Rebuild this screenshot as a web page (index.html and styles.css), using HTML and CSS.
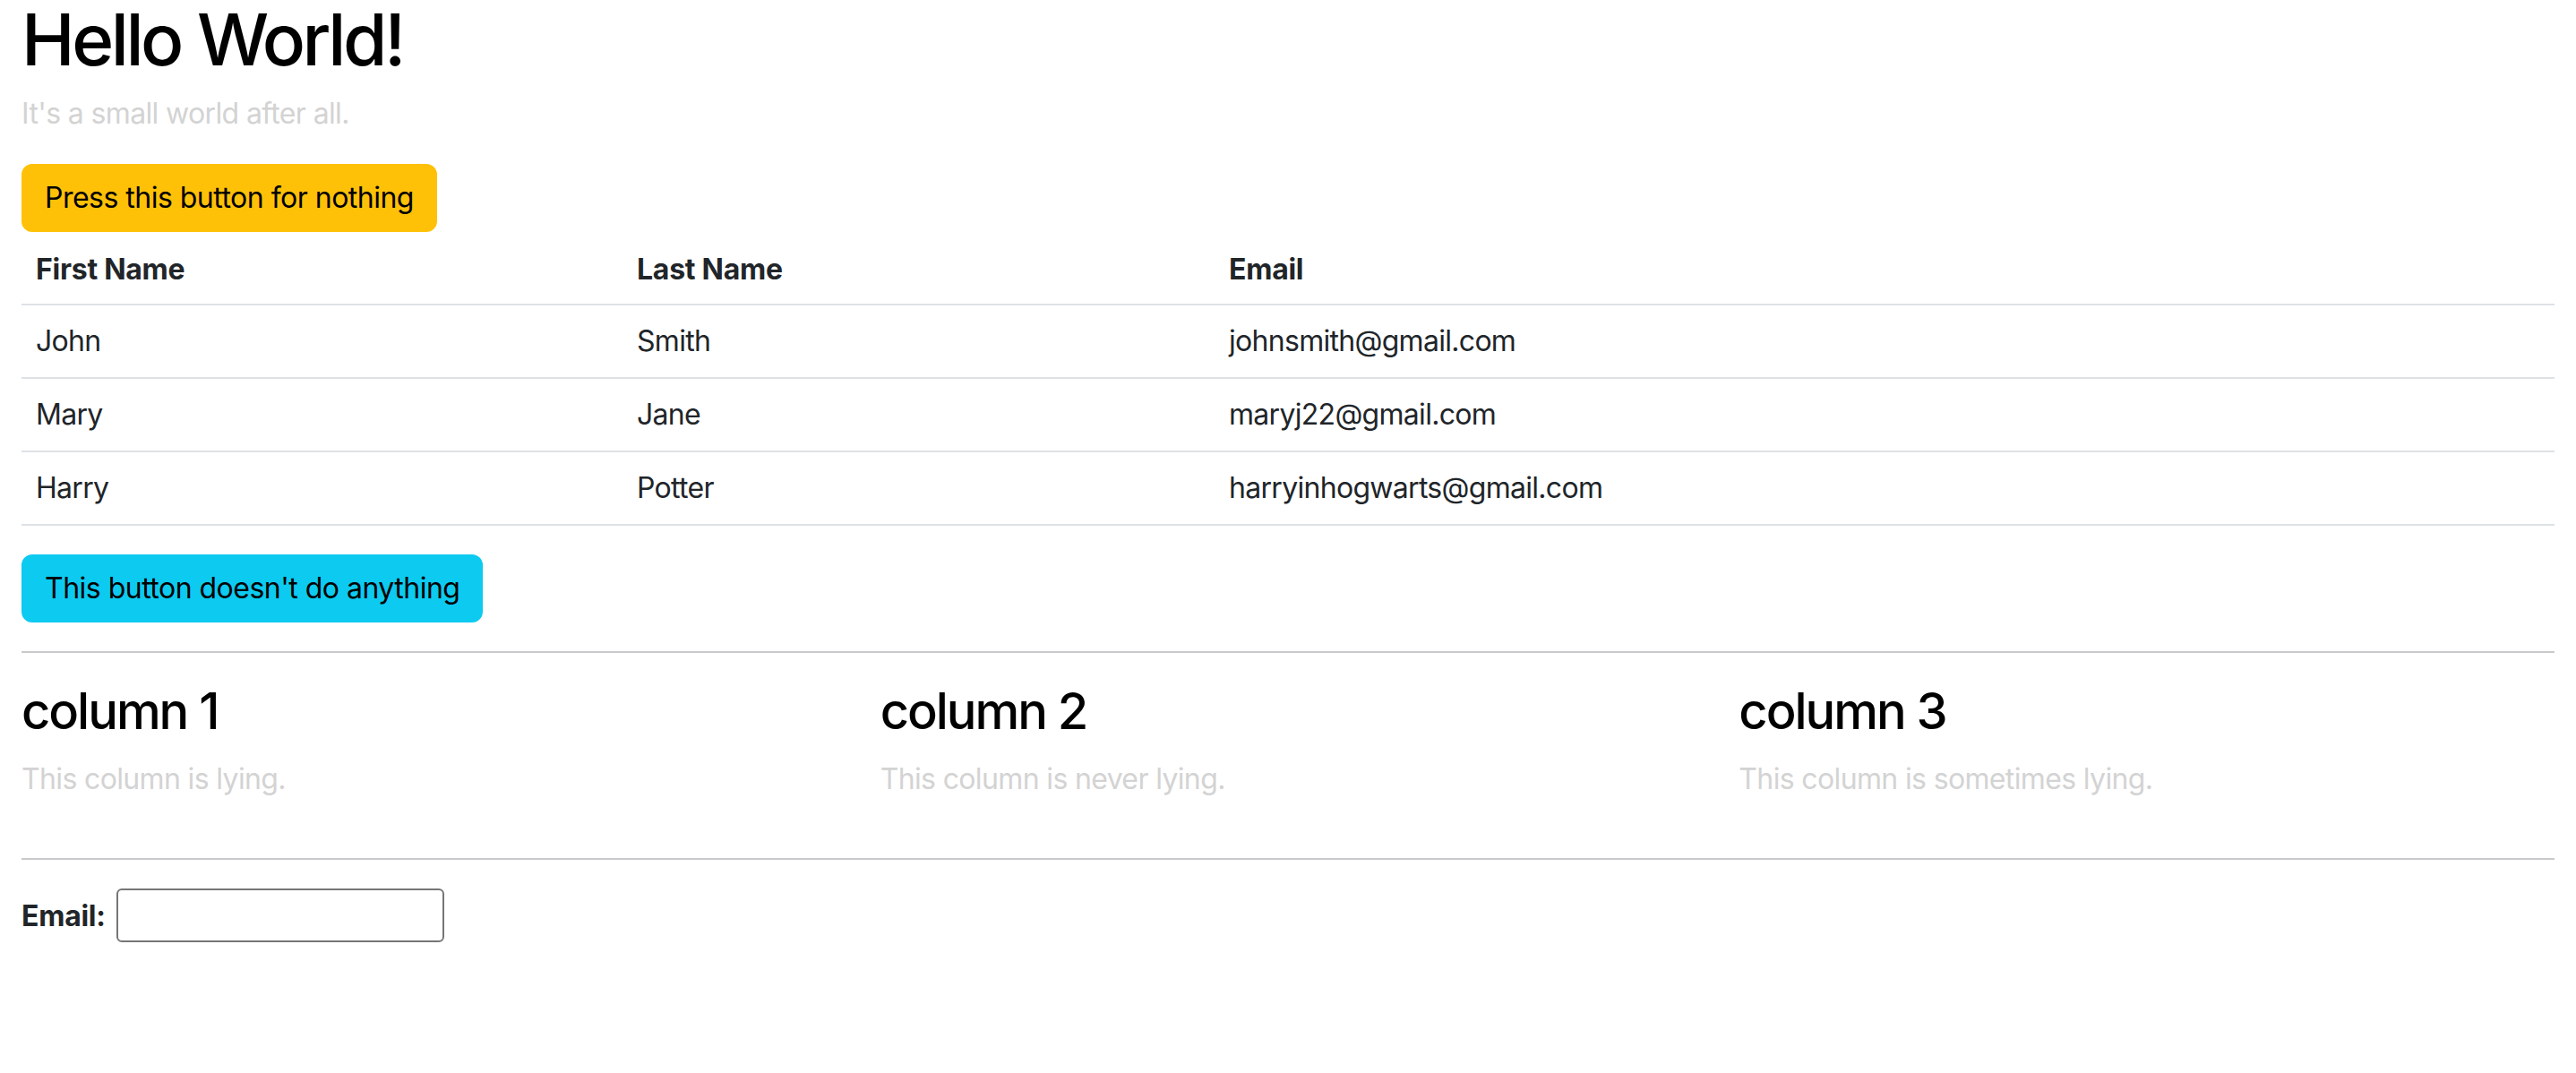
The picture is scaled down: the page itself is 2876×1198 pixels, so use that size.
FILE: index.html
```html
<!DOCTYPE html>
<html lang="en">
<head>
<meta charset="utf-8">
<title>Hello World</title>
<link rel="stylesheet" href="styles.css">
</head>
<body>
<div class="container">
  <h1 class="title">Hello World!</h1>
  <p class="muted lead-gap">It's a small world after all.</p>
  <div class="btn-wrap">
    <button class="btn btn-warning" type="button">Press this button for nothing</button>
  </div>
  <table class="table">
    <thead>
      <tr>
        <th class="c1">First Name</th>
        <th class="c2">Last Name</th>
        <th>Email</th>
      </tr>
    </thead>
    <tbody>
      <tr><td>John</td><td>Smith</td><td>johnsmith@gmail.com</td></tr>
      <tr><td>Mary</td><td>Jane</td><td>maryj22@gmail.com</td></tr>
      <tr><td>Harry</td><td>Potter</td><td>harryinhogwarts@gmail.com</td></tr>
    </tbody>
  </table>
  <div class="btn-wrap">
    <button class="btn btn-info" type="button">This button doesn't do anything</button>
  </div>
  <hr class="rule">
  <div class="cols">
    <div class="col">
      <h3 class="col-title">column 1</h3>
      <p class="muted">This column is lying.</p>
    </div>
    <div class="col">
      <h3 class="col-title">column 2</h3>
      <p class="muted">This column is never lying.</p>
    </div>
    <div class="col">
      <h3 class="col-title">column 3</h3>
      <p class="muted">This column is sometimes lying.</p>
    </div>
  </div>
  <hr class="rule">
  <form class="email-form">
    <label class="email-label" for="email">Email:</label>
    <input class="email-input" type="email" id="email">
  </form>
</div>
</body>
</html>
```

FILE: styles.css
```css
html, body {
  margin: 0;
  padding: 0;
  background: #ffffff;
}

body {
  font-family: Inter, "Liberation Sans", sans-serif;
  font-size: 32px;
  line-height: 1.5;
  letter-spacing: -0.02em;
  color: #212529;
}

.container {
  padding: 0 24px;
}

.title {
  margin: 0 0 16px 0;
  font-size: 80px;
  font-weight: 500;
  line-height: 87px;
  letter-spacing: -0.043em;
  color: #000000;
}

.muted {
  margin: 0 0 32px 0;
  color: #d3d3d3;
}

.btn-wrap {
  display: flex;
}

.btn {
  font-family: inherit;
  font-size: 32px;
  line-height: 48px;
  letter-spacing: -0.016em;
  padding: 12px 24px;
  border: 2px solid transparent;
  border-radius: 12px;
  color: #000000;
  cursor: pointer;
}

.btn-warning {
  background: #ffc107;
  border-color: #ffc107;
}

.btn-info {
  background: #0dcaf0;
  border-color: #0dcaf0;
}

.table {
  width: 100%;
  border-collapse: collapse;
  margin: 0 0 32px 0;
  color: #212529;
}

.table th,
.table td {
  padding: 16px 16px;
  text-align: left;
  border-bottom: 2px solid #dee2e6;
  vertical-align: top;
}

.table td {
  letter-spacing: -0.022em;
}

.table thead th {
  padding-top: 18px;
  padding-bottom: 14px;
}

.table th {
  font-weight: 700;
  letter-spacing: -0.008em;
}

.c1 {
  width: 639px;
}

.c2 {
  width: 629px;
}

.rule {
  margin: 32px 0;
  border: 0;
  border-top: 2px solid #c8c9ca;
  height: 0;
}

.cols {
  display: grid;
  grid-template-columns: repeat(3, 1fr);
  column-gap: 48px;
}

.col-title {
  margin: 0 0 18px 0;
  font-size: 56px;
  font-weight: 500;
  line-height: 1.2;
  letter-spacing: -0.036em;
  color: #000000;
}

.email-form {
  margin: 0;
}

.email-label {
  font-weight: 700;
  letter-spacing: -0.008em;
  color: #212529;
}

.email-input {
  box-sizing: border-box;
  width: 366px;
  height: 60px;
  margin: 0 0 0 4px;
  padding: 2px 4px;
  font-family: inherit;
  font-size: 32px;
  line-height: 48px;
  border: 2px solid #767676;
  border-radius: 6px;
  background: #ffffff;
  vertical-align: baseline;
}
```
